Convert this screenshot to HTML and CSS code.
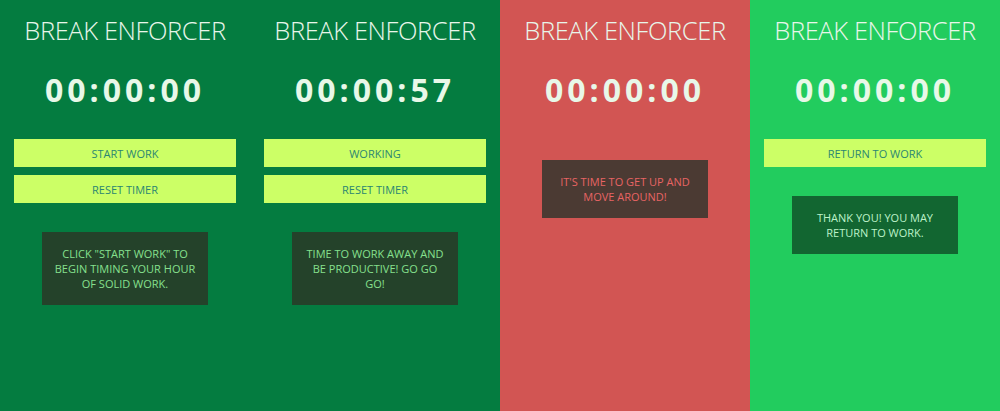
FILE: index.html
```html
<!DOCTYPE html>
<html>
<head>
<meta charset="utf-8">
<link rel="stylesheet" href="styles.css">
</head>
<body>
<main class="strip">
  <section class="panel panel--work">
    <h1 class="title">BREAK ENFORCER</h1>
    <div class="timer">00:00:00</div>
    <div class="controls">
      <button class="btn">START WORK</button>
      <button class="btn">RESET TIMER</button>
    </div>
    <p class="message message--work">CLICK "START WORK" TO BEGIN TIMING YOUR HOUR OF SOLID WORK.</p>
  </section>
  <section class="panel panel--work">
    <h1 class="title">BREAK ENFORCER</h1>
    <div class="timer">00:00:57</div>
    <div class="controls">
      <button class="btn">WORKING</button>
      <button class="btn">RESET TIMER</button>
    </div>
    <p class="message message--work">TIME TO WORK AWAY AND BE PRODUCTIVE! GO GO GO!</p>
  </section>
  <section class="panel panel--break">
    <h1 class="title">BREAK ENFORCER</h1>
    <div class="timer">00:00:00</div>
    <div class="controls controls--empty"></div>
    <p class="message message--break">IT'S TIME TO GET UP AND MOVE AROUND!</p>
  </section>
  <section class="panel panel--done">
    <h1 class="title">BREAK ENFORCER</h1>
    <div class="timer">00:00:00</div>
    <div class="controls">
      <button class="btn">RETURN TO WORK</button>
    </div>
    <p class="message message--done">THANK YOU! YOU MAY RETURN TO WORK.</p>
  </section>
</main>
</body>
</html>
```
FILE: styles.css
```css
* { box-sizing: border-box; }
html, body { margin: 0; padding: 0; }
body {
  width: 1000px;
  height: 411px;
  overflow: hidden;
  font-family: "Open Sans", "Liberation Sans", sans-serif;
}
.strip {
  display: flex;
  height: 411px;
}
.panel {
  width: 250px;
  flex: 0 0 250px;
  padding: 15px 14px 0;
  display: flex;
  flex-direction: column;
  align-items: center;
}
.panel--work { background: #047c40; }
.panel--break { background: #d25553; }
.panel--done { background: #22cc5e; }

.title {
  margin: 0;
  font-size: 25.5px;
  font-weight: 300;
  line-height: 30px;
  color: #e8f6ea;
  white-space: nowrap;
  letter-spacing: -0.4px;
}
.timer {
  margin-top: 25px;
  font-size: 32px;
  font-weight: 700;
  line-height: 40px;
  letter-spacing: 4px;
  color: #e8f8e8;
}
.controls {
  margin-top: 29px;
  width: 100%;
  display: flex;
  flex-direction: column;
  gap: 8px;
}
.controls--empty { gap: 0; }
.btn {
  display: block;
  width: 100%;
  height: 28px;
  margin: 0;
  border: none;
  background: #ccff66;
  color: #2b8672;
  font-family: "Open Sans", "Liberation Sans", sans-serif;
  font-size: 11px;
  letter-spacing: 0;
  padding: 0;
}
.message {
  width: 166px;
  margin: 29px 0 0;
  padding: 14px 10px;
  font-size: 11px;
  line-height: 15px;
  text-align: center;
}
.message--work {
  background: #24422a;
  color: #86e08e;
}
.message--break {
  margin-top: 21px;
  background: #4b3a33;
  color: #e86464;
}
.message--done {
  background: #126631;
  color: #bdf2c9;
}
```
